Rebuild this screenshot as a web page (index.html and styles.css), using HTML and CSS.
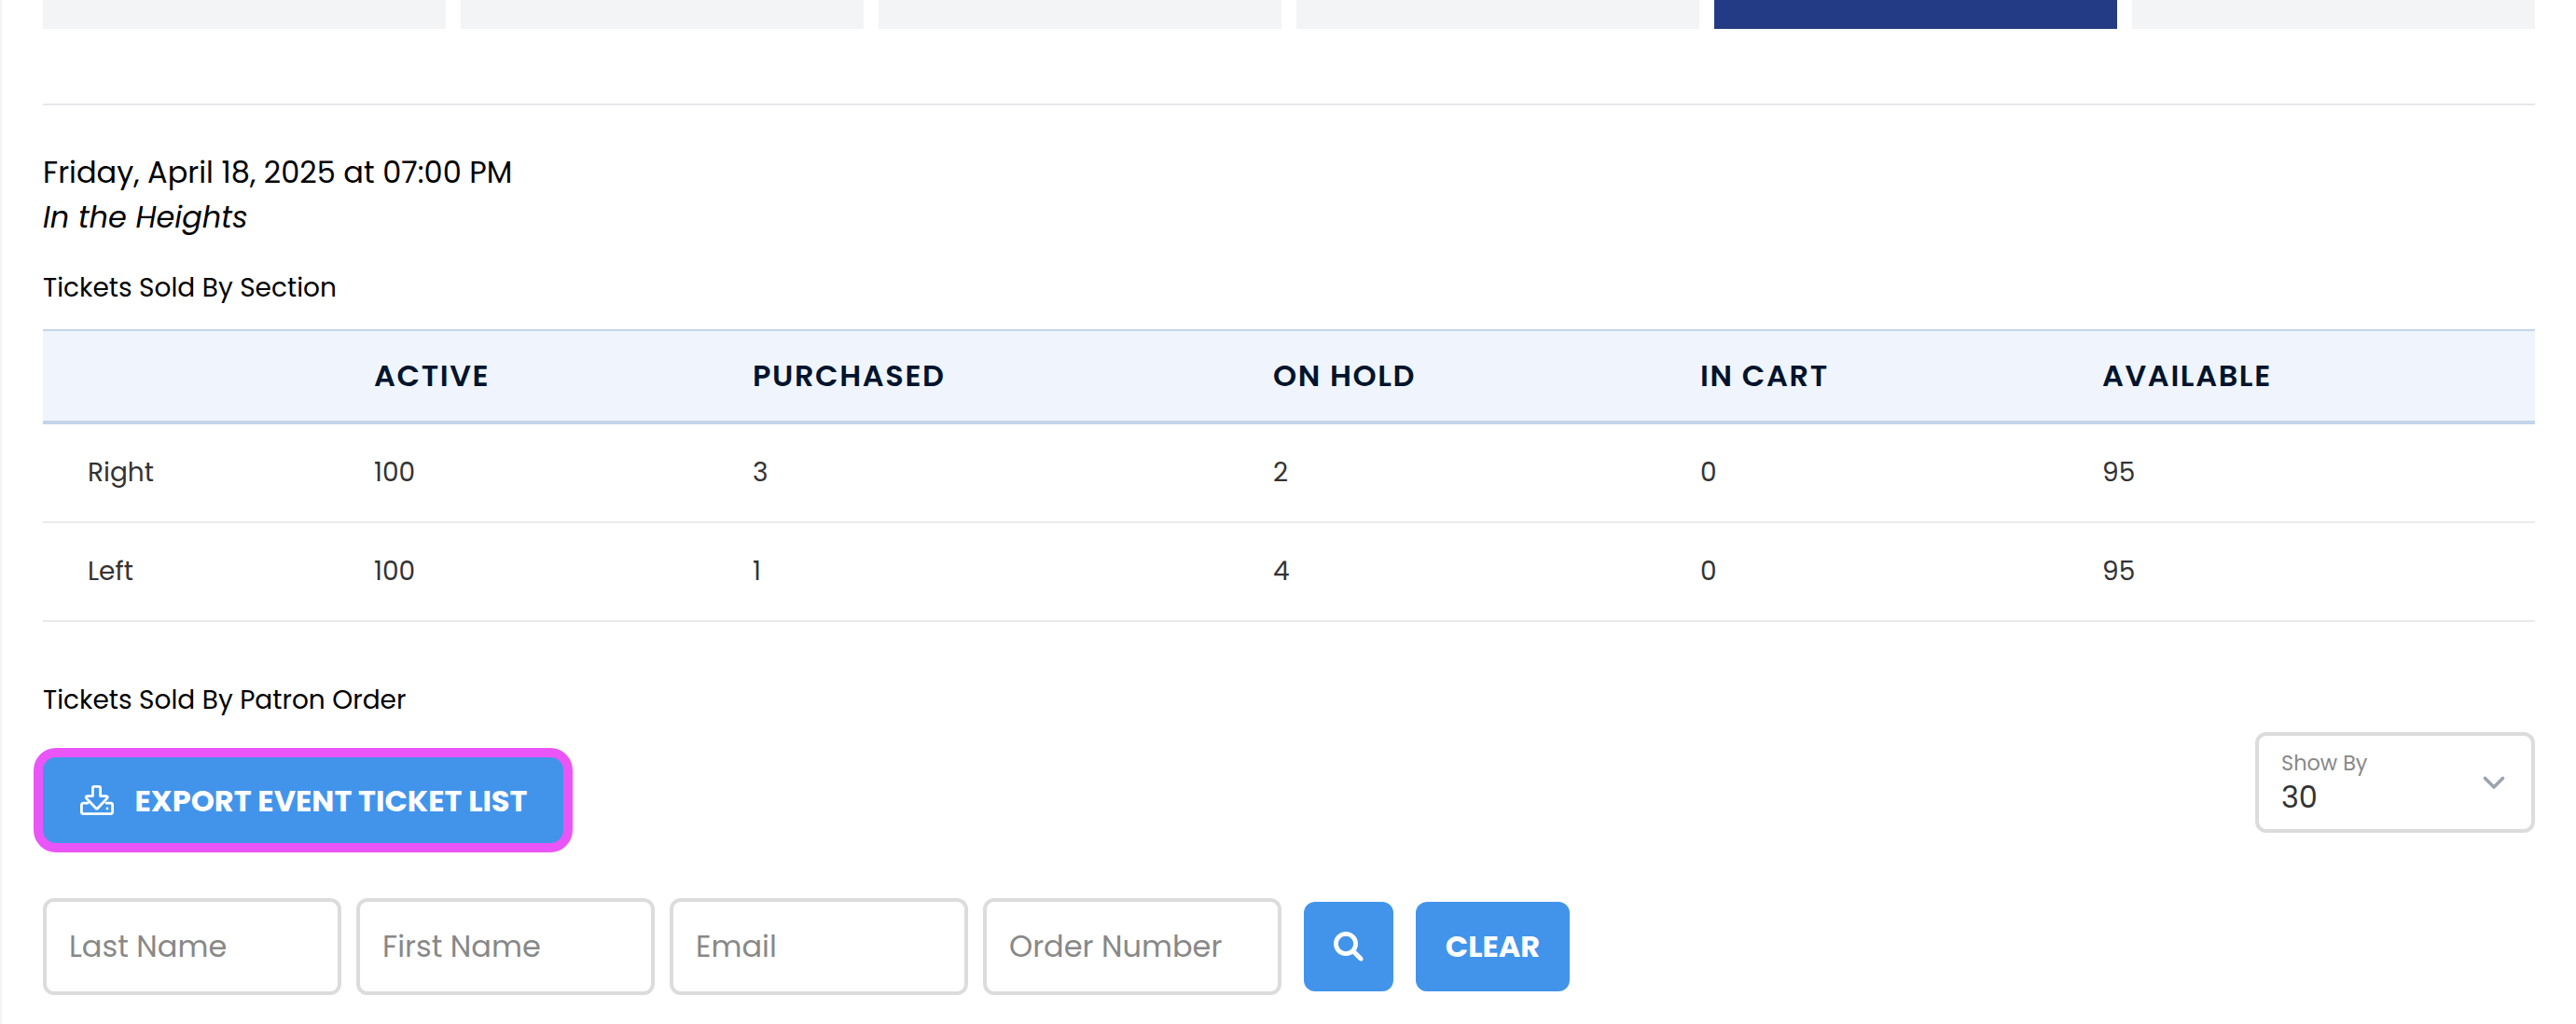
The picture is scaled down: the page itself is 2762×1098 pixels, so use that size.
FILE: index.html
```html
<!DOCTYPE html>
<html lang="en">
<head>
<meta charset="utf-8">
<title>Event Tickets</title>
<link rel="stylesheet" href="styles.css">
</head>
<body>
<main class="page">
  <nav class="tabs">
    <span class="tab"></span>
    <span class="tab"></span>
    <span class="tab"></span>
    <span class="tab"></span>
    <span class="tab tab-active"></span>
    <span class="tab"></span>
  </nav>
  <hr class="divider">

  <header class="event">
    <div class="event-date">Friday, April 18, 2025 at 07:00 PM</div>
    <div class="event-name">In the Heights</div>
  </header>

  <h2 class="section-title">Tickets Sold By Section</h2>
  <table class="sections">
    <colgroup>
      <col class="col-section"><col class="col-active"><col class="col-purchased">
      <col class="col-hold"><col class="col-cart"><col class="col-available">
    </colgroup>
    <thead>
      <tr><th></th><th>Active</th><th>Purchased</th><th>On Hold</th><th>In Cart</th><th>Available</th></tr>
    </thead>
    <tbody>
      <tr><td>Right</td><td>100</td><td>3</td><td>2</td><td>0</td><td>95</td></tr>
      <tr><td>Left</td><td>100</td><td>1</td><td>4</td><td>0</td><td>95</td></tr>
    </tbody>
  </table>

  <h2 class="section-title orders-title">Tickets Sold By Patron Order</h2>
  <div class="toolbar">
    <button class="btn export">
      <svg class="export-icon" width="36" height="32" viewBox="0 0 36 32" fill="none" stroke="#fff" stroke-width="2.8" stroke-linejoin="round" stroke-linecap="round">
        <path d="M8 19.200H3.400a2 2 0 0 0-2 2v7.400a2 2 0 0 0 2 2h29.200a2 2 0 0 0 2-2v-7.400a2 2 0 0 0-2-2H28"/>
        <path d="M14.900 1.400h5.200a1.500 1.500 0 0 1 1.500 1.500v8.700h6.300c1.300 0 1.900 1.400 1 2.300L18.700 24.800a1.200 1.200 0 0 1-1.800 0L6.600 13.900c-.9-.9-.3-2.300 1-2.300h5.800V2.900a1.500 1.500 0 0 1 1.500-1.500z"/>
        <circle cx="29" cy="25" r="1.400" fill="#fff" stroke="none"/>
      </svg>
      <span>EXPORT EVENT TICKET LIST</span>
    </button>
    <div class="select">
      <div>
        <div class="select-label">Show By</div>
        <div class="select-value">30</div>
      </div>
      <svg width="24" height="16" viewBox="0 0 24 16" fill="none" stroke="#9ca3af" stroke-width="3.600" stroke-linecap="round" stroke-linejoin="round"><path d="M2.500 2.500 12 12l9.500-9.500"/></svg>
    </div>
  </div>

  <form class="filters">
    <input class="field" placeholder="Last Name">
    <input class="field" placeholder="First Name">
    <input class="field" placeholder="Email">
    <input class="field" placeholder="Order Number">
    <button type="button" class="btn search" aria-label="Search">
      <svg width="32" height="32" viewBox="0 0 32 32" fill="none" stroke="#fff"><circle cx="13" cy="13" r="10.600" stroke-width="4.800"/><path d="M20.500 20.500 29.300 29.300" stroke-width="5"/><path d="M27.500 27.500 29.500 29.500" stroke-width="4" stroke-linecap="round"/></svg>
    </button>
    <button type="button" class="btn clear">CLEAR</button>
  </form>
</main>
</body>
</html>
```
FILE: styles.css
```css
* { box-sizing: border-box; }

body {
  margin: 0;
  background: #fff;
  color: #000;
  font-family: Poppins, Inter, sans-serif;
  font-size: 32px;
  line-height: 48px;
}

.page {
  min-height: 1098px;
  padding: 0 44px;
  border-left: 2px solid #f3f4f6;
}

.tabs { display: grid; grid-template-columns: repeat(6, 1fr); gap: 16px; height: 31px; }
.tab { background: #f3f4f6; }
.tab-active { background: #233b84; }

.divider { margin: 80px 0 48px; border: 0; height: 2px; background: #e5e7eb; }

.event-name { font-style: italic; }

.section-title {
  margin: 31px 0 23px;
  font-size: 28px;
  font-weight: 400;
  line-height: 42px;
}

.sections { width: 100%; table-layout: fixed; border-collapse: separate; border-spacing: 0; }
.col-section { width: 307px; }
.col-active { width: 406px; }
.col-purchased { width: 558px; }
.col-hold { width: 458px; }
.col-cart { width: 431px; }
.sections th {
  height: 102px;
  padding: 0 0 0 48px;
  background: #f0f5fd;
  border-top: 2px solid #c3d5eb;
  border-bottom: 4px solid #c3d5eb;
  color: #04142d;
  font-weight: 600;
  text-align: left;
  text-transform: uppercase;
  letter-spacing: 1.6px;
}
.sections td {
  height: 106px;
  padding: 0 0 0 48px;
  border-bottom: 2px solid #e9eaeb;
  color: #333;
  font-size: 28px;
}

.orders-title { margin: 63px 0 13px; }

.toolbar { display: flex; justify-content: space-between; align-items: flex-start; }

.btn {
  display: flex;
  align-items: center;
  justify-content: center;
  padding: 0;
  border: 0;
  border-radius: 12px;
  background: #4294eb;
  color: #fff;
  font: inherit;
  font-weight: 700;
}
.export {
  width: 558px;
  height: 92px;
  margin-top: 27px;
  padding-left: 40px;
  justify-content: flex-start;
  gap: 22.5px;
  border-radius: 14px;
  box-shadow: 0 0 0 10px #ea55f7;
  white-space: nowrap;
}
.export span { padding-top: 1px; }

.select {
  display: flex;
  justify-content: space-between;
  width: 300px;
  height: 108px;
  padding: 15px 28px 0 24px;
  border: 4px solid #dcdcdc;
  border-radius: 12px;
  color: #333;
}
.select svg { margin-top: 28px; }
.select-label { color: #888; font-size: 22.4px; line-height: 28px; }
.select-value { line-height: 48px; margin-top: -1px; }

.filters { display: flex; align-items: center; gap: 16px; margin-top: 59px; }
.field {
  width: 320px;
  height: 104px;
  padding: 0 24px;
  border: 4px solid #dcdcdc;
  border-radius: 12px;
  font: inherit;
}
.field::placeholder { color: #888; opacity: 1; }
.search { width: 96px; height: 96px; margin-left: 8px; }
.clear { width: 165px; height: 96px; margin-left: 8px; }
```
